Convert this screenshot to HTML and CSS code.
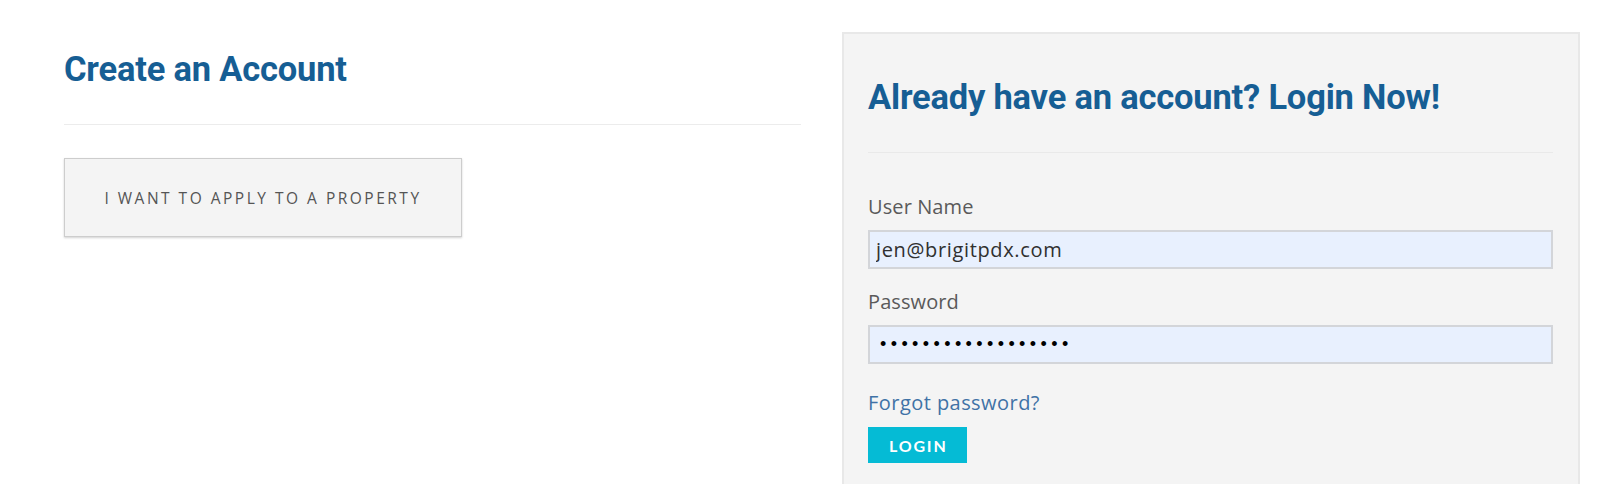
FILE: index.html
```html
<!DOCTYPE html>
<html lang="en">
<head>
<meta charset="utf-8">
<title>Create an Account</title>
<link rel="stylesheet" href="styles.css">
</head>
<body>
<div class="page">
  <section class="create">
    <h1 class="title">Create an Account</h1>
    <hr class="rule">
    <a class="apply-btn" href="#">I want to apply to a property</a>
  </section>
  <section class="login-panel">
    <h2 class="title">Already have an account? Login Now!</h2>
    <hr class="rule">
    <form class="login-form">
      <div class="field">
        <label class="label" for="user">User Name</label>
        <input class="input" id="user" type="text" value="jen@brigitpdx.com">
      </div>
      <div class="field">
        <label class="label" for="pass">Password</label>
        <input class="input input-pass" id="pass" type="password" value="abcdefghijklmnopqr">
      </div>
      <a class="forgot" href="#">Forgot password?</a>
      <button class="login-btn" type="button">Login</button>
    </form>
  </section>
</div>
</body>
</html>
```
FILE: styles.css
```css
html, body {
  margin: 0;
  padding: 0;
  background: #ffffff;
  height: 484px;
  overflow: hidden;
}

.page {
  display: grid;
  grid-template-columns: 737px 738px;
  column-gap: 41px;
  padding: 32px 20px 0 64px;
  align-items: start;
}

.title {
  margin: 0;
  font-family: Roboto, "Liberation Sans", sans-serif;
  font-weight: 700;
  font-size: 34.5px;
  line-height: 40px;
  color: #165e94;
  letter-spacing: -0.2px;
}

.rule {
  border: 0;
  border-top: 1px solid #ececec;
  height: 0;
  margin: 0;
}

.create {
  padding-top: 17px;
}

.create .rule {
  margin-top: 35px;
}

.apply-btn {
  display: flex;
  align-items: center;
  justify-content: center;
  box-sizing: border-box;
  width: 398px;
  height: 79px;
  margin-top: 33px;
  background: #f4f4f4;
  border: 1px solid #cdcdcd;
  box-shadow: 0 1px 2px rgba(0, 0, 0, 0.18);
  font-family: "Open Sans", "Liberation Sans", sans-serif;
  font-size: 15.5px;
  letter-spacing: 2.5px;
  text-transform: uppercase;
  color: #555555;
  text-decoration: none;
}

.login-panel {
  box-sizing: border-box;
  min-height: 470px;
  background: #f4f4f4;
  border: 2px solid #e8e8e8;
  border-bottom: 0;
  padding: 43px 25px 0 24px;
}

.login-panel .rule {
  margin-top: 35px;
  border-top-color: #e9e9e9;
}

.login-form {
  display: flex;
  flex-direction: column;
  align-items: flex-start;
  padding-top: 42px;
}

.field {
  display: flex;
  flex-direction: column;
  align-self: stretch;
  margin-bottom: 21px;
}

.label {
  font-family: "Open Sans", "Liberation Sans", sans-serif;
  font-size: 20px;
  line-height: 24px;
  letter-spacing: 0.1px;
  color: #5a5a5a;
  margin-bottom: 11px;
}

.input {
  box-sizing: border-box;
  height: 39px;
  margin: 0;
  padding: 0 6px;
  background: #e8f0fe;
  border: 2px solid #d3d5d9;
  border-radius: 0;
  font-family: "Open Sans", "Liberation Sans", sans-serif;
  font-size: 20px;
  letter-spacing: 0.65px;
  color: #303030;
  outline: none;
}

.input-pass {
  padding-left: 10px;
  color: #000000;
  font-family: "Liberation Sans", sans-serif;
  font-size: 18px;
  letter-spacing: 4.4px;
}

.forgot {
  margin-top: 6px;
  font-family: "Open Sans", "Liberation Sans", sans-serif;
  font-size: 20px;
  line-height: 24px;
  letter-spacing: 0.45px;
  color: #3f72a6;
  text-decoration: none;
}

.login-btn {
  margin-top: 12px;
  height: 36px;
  padding: 0 19px 0 21px;
  border: 0;
  border-radius: 0;
  background: #05bbd5;
  color: #ffffff;
  font-family: Lato, "Liberation Sans", sans-serif;
  font-weight: 700;
  font-size: 16px;
  letter-spacing: 1.8px;
  text-transform: uppercase;
}
```
